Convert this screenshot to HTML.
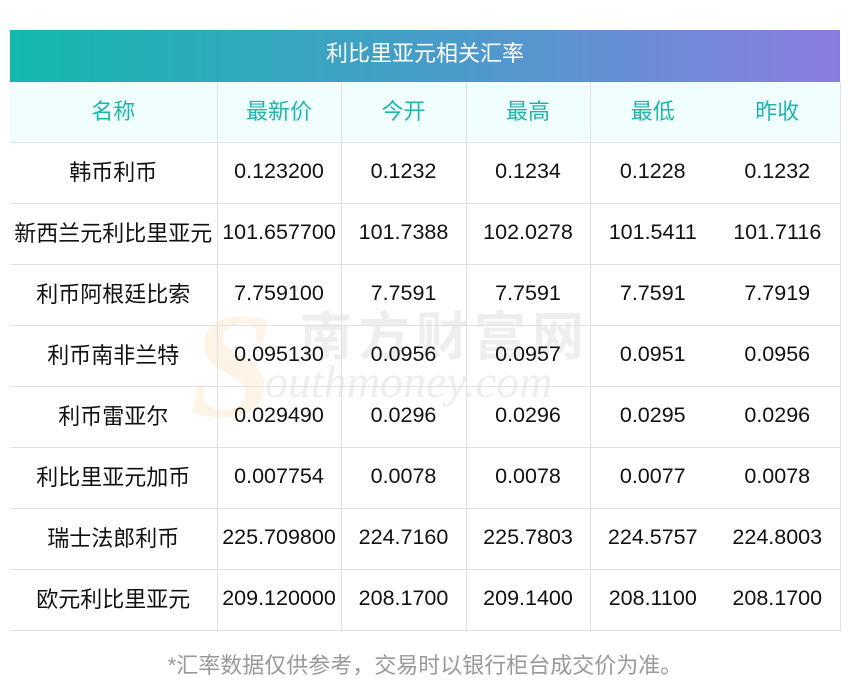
<!DOCTYPE html>
<html><head><meta charset="utf-8"><style>
body{margin:0;width:850px;height:697px;background:#fff;font-family:"Liberation Sans","Noto Sans CJK SC",sans-serif;position:relative;overflow:hidden}
.title{position:absolute;left:10px;top:30px;width:830px;height:52px;background:linear-gradient(90deg,#13b8ac,#4c9acb 55%,#8b7de0);color:#fff;font-size:22px;text-align:center;line-height:48px}
table{position:absolute;left:10px;top:82px;border-collapse:collapse;width:830px;table-layout:fixed}
td{height:61px;border-bottom:1px solid #dfe0ea;text-align:center;font-size:21.5px;color:#111;padding:0 0 4px 0;white-space:nowrap;line-height:22px;box-sizing:border-box}
td.c{padding:0;font-size:22px}
td span{display:inline-block;line-height:22px;height:22px;position:relative}
tr.h td{background:#f0fffe;color:#1fb5ac;height:60px;font-size:22px}
td.b{border-right:1px solid #dfe0ea}
td.r{border-right:1px solid #dfe0ea}
.wm{position:absolute;color:rgba(200,200,210,0.3);font-weight:bold}
.foot{position:absolute;top:648px;left:0;width:850px;text-align:center;color:#999;font-size:22px}
</style></head><body>
<div class="title">利比里亚元相关汇率</div>
<div class="wm" style="left:300px;top:295px;font-size:52px;letter-spacing:6px">南方财富网</div>
<div class="wm" style="left:265px;top:355px;font-size:46px;font-style:italic;font-family:'Liberation Serif',serif;font-weight:normal">outhmoney.com</div>
<div class="wm" style="left:190px;top:280px;font-size:150px;color:rgba(250,200,130,0.2);font-style:italic;font-family:'Liberation Serif',serif">S</div>
<table>
<colgroup><col style="width:207px"><col style="width:124px"><col style="width:125px"><col style="width:124px"><col style="width:125px"><col style="width:125px"></colgroup>
<tr class="h"><td class="b c"><span>名称</span></td><td class="b c"><span>最新价</span></td><td class="b c"><span>今开</span></td><td class="b c"><span>最高</span></td><td class="c"><span>最低</span></td><td class="r c"><span>昨收</span></td></tr>
<tr><td class="b c"><span>韩币利币</span></td><td class="b">0.123200</td><td class="b">0.1232</td><td class="b">0.1234</td><td>0.1228</td><td class="r">0.1232</td></tr>
<tr><td class="b c"><span>新西兰元利比里亚元</span></td><td class="b">101.657700</td><td class="b">101.7388</td><td class="b">102.0278</td><td>101.5411</td><td class="r">101.7116</td></tr>
<tr><td class="b c"><span>利币阿根廷比索</span></td><td class="b">7.759100</td><td class="b">7.7591</td><td class="b">7.7591</td><td>7.7591</td><td class="r">7.7919</td></tr>
<tr><td class="b c"><span>利币南非兰特</span></td><td class="b">0.095130</td><td class="b">0.0956</td><td class="b">0.0957</td><td>0.0951</td><td class="r">0.0956</td></tr>
<tr><td class="b c"><span>利币雷亚尔</span></td><td class="b">0.029490</td><td class="b">0.0296</td><td class="b">0.0296</td><td>0.0295</td><td class="r">0.0296</td></tr>
<tr><td class="b c"><span>利比里亚元加币</span></td><td class="b">0.007754</td><td class="b">0.0078</td><td class="b">0.0078</td><td>0.0077</td><td class="r">0.0078</td></tr>
<tr><td class="b c"><span>瑞士法郎利币</span></td><td class="b">225.709800</td><td class="b">224.7160</td><td class="b">225.7803</td><td>224.5757</td><td class="r">224.8003</td></tr>
<tr><td class="b c"><span>欧元利比里亚元</span></td><td class="b">209.120000</td><td class="b">208.1700</td><td class="b">209.1400</td><td>208.1100</td><td class="r">208.1700</td></tr>
</table>
<div class="foot">*汇率数据仅供参考，交易时以银行柜台成交价为准。</div>
</body></html>
